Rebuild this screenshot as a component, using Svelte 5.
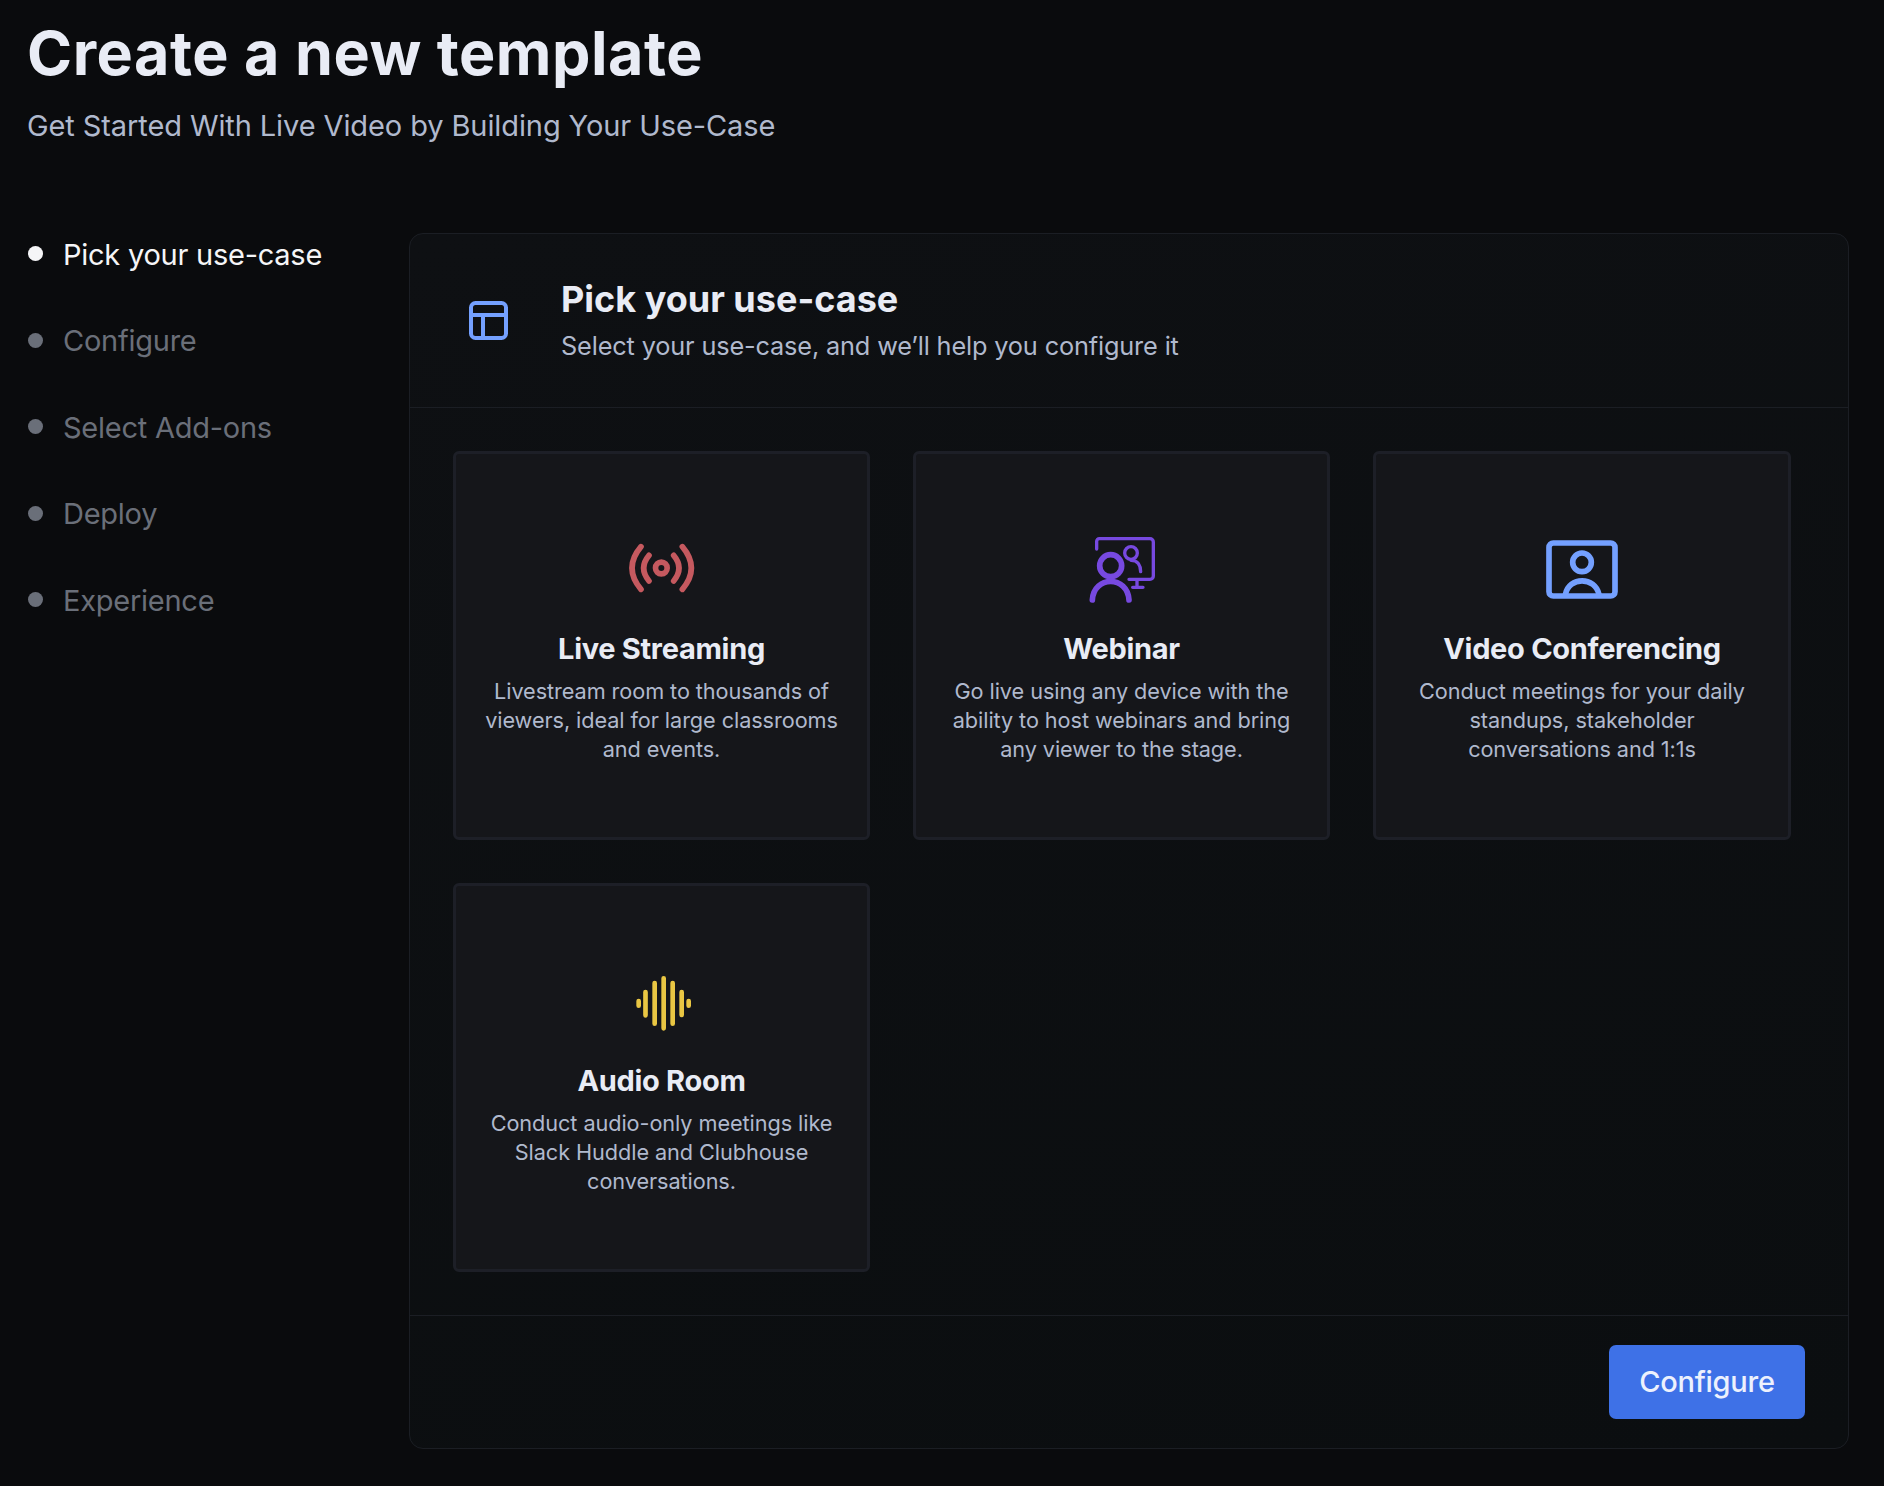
<script>
  const steps = ['Pick your use-case', 'Configure', 'Select Add-ons', 'Deploy', 'Experience'];
  const cases = [
    { icon: 'live', title: 'Live Streaming', text: 'Livestream room to thousands of viewers, ideal for large classrooms and events.' },
    { icon: 'webinar', title: 'Webinar', text: 'Go live using any device with the ability to host webinars and bring any viewer to the stage.' },
    { icon: 'video', title: 'Video Conferencing', text: 'Conduct meetings for your daily standups, stakeholder conversations and 1:1s' },
    { icon: 'audio', title: 'Audio Room', text: 'Conduct audio-only meetings like Slack Huddle and Clubhouse conversations.' }
  ];
</script>

<main>
  <header class="top">
    <h1>Create a new template</h1>
    <p>Get Started With Live Video by Building Your Use-Case</p>
  </header>
  <div class="body">
    <nav>
      {#each steps as step, i}
        <div class="step" class:active={i === 0}><i></i><span>{step}</span></div>
      {/each}
    </nav>
    <section class="panel">
      <div class="head">
        <svg class="layout" viewBox="0 0 39 39"><rect x="2" y="2" width="35" height="35" rx="4.500" /><path d="M2 14H37M14 14V37" /></svg>
        <div>
          <h2>Pick your use-case</h2>
          <p>Select your use-case, and we’ll help you configure it</p>
        </div>
      </div>
      <div class="grid">
        {#each cases as item}
          <article>
            {#if item.icon === 'live'}
              <svg class="icon live" viewBox="78 36 216 216"><circle cx="184" cy="144" r="17.5" /><path d="M147 106Q115 144 147 183M221 106Q253 144 221 183M123 80Q69 144 123 208M247 80Q301 144 247 208" /></svg>
            {:else if item.icon === 'webinar'}
              <svg class="icon webinar" viewBox="47 36 216 216"><path class="thin" d="M79 87V64a8 8 0 0 1 8-8H239a10 10 0 0 1 10 10V168a10 10 0 0 1-10 10H176M200 178V202M187 202H218M182 121C203 121 211 137 211 155" /><circle class="thin" cx="182" cy="99" r="19" /><circle cx="121" cy="137" r="33" /><path d="M66 240C70 166 172 166 176 240" /></svg>
            {:else if item.icon === 'video'}
              <svg class="icon video" viewBox="48 36 216 216"><rect x="57" y="69" width="198" height="159" rx="13" /><circle cx="156" cy="127" r="28" /><path class="flat" d="M106 224C116 169 196 169 207 224" /></svg>
            {:else}
              <svg class="icon audio" viewBox="47 42 216 216"><path d="M85 153V167M105.500 126V196M133 99V221M160 85V235M187 99V221M214 126V195M235 153V167" /></svg>
            {/if}
            <h3>{item.title}</h3>
            <p>{item.text}</p>
          </article>
        {/each}
      </div>
      <footer><button>Configure</button></footer>
    </section>
  </div>
</main>

<style>
  :global(body) { background: #0a0b0d; }
  main { box-sizing: border-box; width: 1884px; height: 1486px; padding: 15px 35px 0 28px; overflow: hidden; font-family: Inter, sans-serif; color: #e9ecf5; }
  h1, h2, h3, p { margin: 0; }
  .top { height: 218px; }
  h1 { margin-left: -1px; font-size: 61px; line-height: 76px; font-weight: 700; white-space: nowrap; letter-spacing: .520px; }
  .top p { margin-left: -1px; font-size: 29px; line-height: 44px; margin-top: 13px; color: #b0b9cd; letter-spacing: -.1px; font-weight: 430; }
  .body { display: grid; grid-template-columns: 381px 1440px; }
  nav { margin-top: -1px; }
  .step { display: flex; align-items: center; height: 44px; margin-bottom: 42.500px; font-size: 29px; font-weight: 430; letter-spacing: -.25px; color: #6a6f79; }
  .step i { width: 15px; height: 15px; border-radius: 50%; background: currentColor; margin: -1px 20px 0 0; }
  .step.active { color: #f5f5f7; }
  .panel { box-sizing: border-box; height: 1216px; border: 1px solid #1b1e24; border-radius: 14px; background: linear-gradient(165deg, #0e1013, #0b0e10); display: flex; flex-direction: column; }
  .head { box-sizing: border-box; height: 175px; border-bottom: 1px solid #1b1e24; display: flex; align-items: center; padding-left: 59px; }
  .layout { width: 39px; height: 39px; fill: none; stroke: #74a0ff; stroke-width: 4; margin-right: 53px; }
  h2 { font-size: 36px; line-height: 47px; font-weight: 650; }
  .head p { font-size: 25.300px; line-height: 36px; margin: 5px 0 2px; color: #b0b9cd; letter-spacing: -.15px; font-weight: 430; }
  .grid { flex: 1; display: grid; grid-template-columns: 417px 417px 418px; grid-auto-rows: 389px; gap: 43px; padding: 43px; }
  article { box-sizing: border-box; border: 3px solid #1d1f27; border-radius: 6px; background: #15161a; padding: 78px 24px 0; text-align: center; }
  .icon { display: block; width: 72px; height: 72px; margin: 0 auto 23px; fill: none; stroke-width: 17; stroke-linecap: round; }
  .live { stroke: #c5595f; }
  .webinar { stroke: #7749e0; }
  .video { stroke: #74a0ff; }
  .audio { stroke: #e9c643; stroke-width: 14; }
  .thin { stroke-width: 10; }
  .flat { stroke-linecap: butt; }
  h3 { font-size: 29px; line-height: 43px; font-weight: 650; letter-spacing: -.3px; }
  .grid p { font-size: 21.700px; line-height: 29px; margin-top: 7px; color: #b0b9cd; letter-spacing: -.08px; font-weight: 430; }
  footer { box-sizing: border-box; height: 133px; border-top: 1px solid #1b1e24; padding: 29px 43px 0 0; display: flex; justify-content: flex-end; }
  button { width: 196px; height: 74px; border: 0; border-radius: 7px; background: #3e71e7; color: #edf1fd; font: 500 29px Inter, sans-serif; letter-spacing: -.25px; padding: 0 0 2px; }
</style>
